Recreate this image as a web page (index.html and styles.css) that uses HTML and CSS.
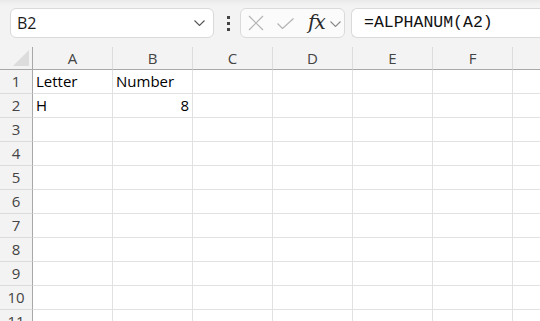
FILE: index.html
```html
<!DOCTYPE html>
<html lang="en">
<head>
    <meta charset="UTF-8">
    <title>ALPHANUM</title>
    <link rel="stylesheet" href="styles.css">
</head>
<body>
    <div class="toolbar">
        <div class="namebox">
            <span class="namebox-text">B2</span>
            <svg class="chev" width="11" height="6" viewBox="0 0 11 6"><path d="M0.5 0.5 L5.5 5.5 L10.5 0.5" fill="none" stroke="#555" stroke-width="1.1"/></svg>
        </div>
        <div class="kebab"><i></i><i></i><i></i></div>
        <div class="fxbox">
            <svg class="icon-x" width="16" height="16" viewBox="0 0 16 16"><path d="M1 1 L15 15 M15 1 L1 15" stroke="#b4b4b4" stroke-width="1.2"/></svg>
            <svg class="icon-ok" width="17" height="11" viewBox="0 0 17 11"><path d="M0.5 5.5 L5.5 10.5 L16.5 0.5" fill="none" stroke="#b4b4b4" stroke-width="1.2"/></svg>
            <span class="fx">fx</span>
            <svg class="chev small" width="11" height="6" viewBox="0 0 11 6"><path d="M0.5 0.5 L5.5 5.5 L10.5 0.5" fill="none" stroke="#8a8a8a" stroke-width="1.1"/></svg>
        </div>
        <div class="formula">=ALPHANUM(A2)</div>
    </div>

    <div class="sheet">
        <div class="corner"><span class="tri"></span></div>
        <div class="colhead">A</div>
        <div class="colhead">B</div>
        <div class="colhead">C</div>
        <div class="colhead">D</div>
        <div class="colhead">E</div>
        <div class="colhead">F</div>
        <div class="colhead"></div>

        <div class="rowhead">1</div>
        <div class="cell">Letter</div><div class="cell">Number</div><div class="cell"></div><div class="cell"></div><div class="cell"></div><div class="cell"></div><div class="cell"></div>
        <div class="rowhead">2</div>
        <div class="cell">H</div><div class="cell num">8</div><div class="cell"></div><div class="cell"></div><div class="cell"></div><div class="cell"></div><div class="cell"></div>
        <div class="rowhead">3</div>
        <div class="cell"></div><div class="cell"></div><div class="cell"></div><div class="cell"></div><div class="cell"></div><div class="cell"></div><div class="cell"></div>
        <div class="rowhead">4</div>
        <div class="cell"></div><div class="cell"></div><div class="cell"></div><div class="cell"></div><div class="cell"></div><div class="cell"></div><div class="cell"></div>
        <div class="rowhead">5</div>
        <div class="cell"></div><div class="cell"></div><div class="cell"></div><div class="cell"></div><div class="cell"></div><div class="cell"></div><div class="cell"></div>
        <div class="rowhead">6</div>
        <div class="cell"></div><div class="cell"></div><div class="cell"></div><div class="cell"></div><div class="cell"></div><div class="cell"></div><div class="cell"></div>
        <div class="rowhead">7</div>
        <div class="cell"></div><div class="cell"></div><div class="cell"></div><div class="cell"></div><div class="cell"></div><div class="cell"></div><div class="cell"></div>
        <div class="rowhead">8</div>
        <div class="cell"></div><div class="cell"></div><div class="cell"></div><div class="cell"></div><div class="cell"></div><div class="cell"></div><div class="cell"></div>
        <div class="rowhead">9</div>
        <div class="cell"></div><div class="cell"></div><div class="cell"></div><div class="cell"></div><div class="cell"></div><div class="cell"></div><div class="cell"></div>
        <div class="rowhead">10</div>
        <div class="cell"></div><div class="cell"></div><div class="cell"></div><div class="cell"></div><div class="cell"></div><div class="cell"></div><div class="cell"></div>
        <div class="rowhead">11</div>
        <div class="cell"></div><div class="cell"></div><div class="cell"></div><div class="cell"></div><div class="cell"></div><div class="cell"></div><div class="cell"></div>
    </div>
</body>
</html>
```

FILE: styles.css
```css
html, body {
    margin: 0;
    padding: 0;
    overflow: hidden;
}
body {
    width: 540px;
    height: 321px;
    background: #ffffff;
    font-family: "Open Sans", "Noto Sans", sans-serif;
    color: #000;
}
.toolbar {
    display: flex;
    align-items: center;
    height: 47px;
    box-sizing: border-box;
    padding: 8px 0 9px 10px;
    background: linear-gradient(#e9e9e9 0, #f1f1f1 4px, #f3f3f3 8px);
    white-space: nowrap;
}
.namebox {
    display: flex;
    align-items: center;
    width: 204px;
    height: 30px;
    box-sizing: border-box;
    background: #fff;
    border: 1px solid #dadada;
    border-radius: 6px;
    padding: 0 8px 0 6px;
}
.namebox-text {
    flex: 1;
    font-size: 16px;
    color: #1a1a1a;
}
.kebab {
    display: flex;
    flex-direction: column;
    gap: 3px;
    margin: 0 10px 0 13px;
}
.kebab i {
    display: block;
    width: 3px;
    height: 3px;
    background: #444;
}
.fxbox {
    display: flex;
    align-items: center;
    width: 105px;
    height: 30px;
    box-sizing: border-box;
    background: #fbfbfb;
    border: 1px solid #dadada;
    border-radius: 6px;
    padding: 0 0 0 7px;
}
.icon-x {
    margin-right: 13px;
}
.icon-ok {
    margin-right: 14px;
}
.fx {
    font-family: "DejaVu Serif", "Liberation Serif", serif;
    font-style: italic;
    font-size: 20px;
    letter-spacing: -1px;
    line-height: 1;
    color: #2b2b2b;
    margin-right: 5px;
    margin-top: -2px;
}
.chev.small {
    margin-top: 1px;
}
.formula {
    flex: 1;
    height: 30px;
    box-sizing: border-box;
    margin-left: 6px;
    background: #fff;
    border: 1px solid #dadada;
    border-right: none;
    border-radius: 6px 0 0 6px;
    padding-left: 12px;
    font-family: "Liberation Mono", monospace;
    font-size: 16.5px;
    line-height: 28px;
    color: #111;
}
.sheet {
    display: grid;
    grid-template-columns: 33px repeat(7, 80px);
    grid-template-rows: 23px repeat(11, 24px);
    font-size: 15px;
}
.corner,
.colhead,
.rowhead {
    background: #f3f3f3;
    color: #444;
    box-sizing: border-box;
}
.corner {
    position: relative;
    border-right: 1px solid #a8a8a8;
    border-bottom: 1px solid #a8a8a8;
}
.tri {
    position: absolute;
    right: 3px;
    bottom: 3px;
    width: 0;
    height: 0;
    border-left: 16px solid transparent;
    border-bottom: 16px solid #dcdcdc;
}
.colhead {
    text-align: center;
    line-height: 22px;
    border-right: 1px solid #dcdcdc;
    border-bottom: 1px solid #a8a8a8;
}
.rowhead {
    text-align: center;
    line-height: 23px;
    border-right: 1px solid #a8a8a8;
    border-bottom: 1px solid #dcdcdc;
}
.cell {
    box-sizing: border-box;
    border-right: 1px solid #e1e1e1;
    border-bottom: 1px solid #e1e1e1;
    padding: 0 3px;
    line-height: 23px;
    white-space: nowrap;
    overflow: hidden;
}
.cell.num {
    text-align: right;
}
```
